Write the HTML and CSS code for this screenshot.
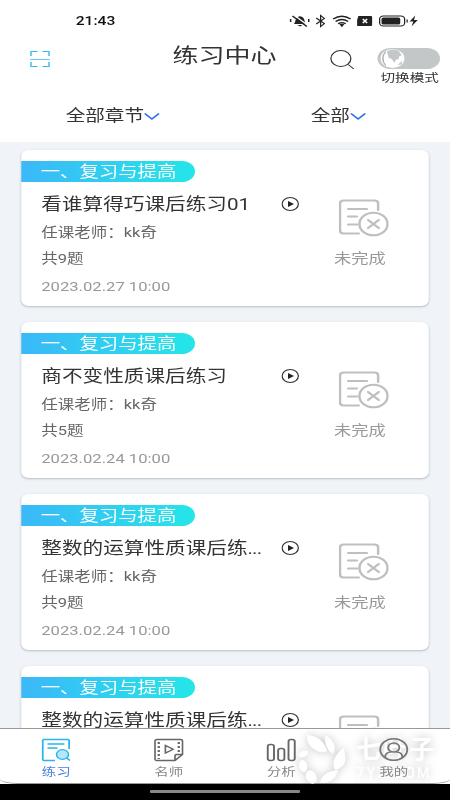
FILE: index.html
```html
<!DOCTYPE html>
<html lang="zh-CN">
<head>
<meta charset="utf-8">
<title>练习中心</title>
<link rel="stylesheet" href="styles.css">
</head>
<body>
<svg class="defs" width="0" height="0">
  <defs>
    <symbol id="play" viewBox="0 0 14.4 14"><circle cx="7.2" cy="7" r="6.5" fill="none" stroke="#333" stroke-width="1"/><path d="M5.4 4 10.200 7 5.400 10z" fill="#222"/></symbol>
    <symbol id="undone" viewBox="0 0 40 38"><g fill="none" stroke="#bfbfbf" stroke-width="2" stroke-linecap="round"><path d="M31.500 11V4.500Q31.500 1.500 28.500 1.500H4Q1 1.500 1 4.500V31.500Q1 34.500 4 34.500H16M7.500 10H22.500M7.500 17.500H14.500M7.500 25.500H14.500"/><circle cx="27.800" cy="25" r="11.300"/><path d="M23.500 21 32 29M32 21 23.500 29"/></g></symbol>
  </defs>
</svg>
<div class="screen">
  <div class="status">
    <span class="time">21:43</span>
    <svg class="status-icons" width="104" height="14" viewBox="0 0 104 14">
      <g fill="#222"><path d="M4 10C6 8.500 4.500 3 9 2.300 13.500 3 12 8.500 14 10zM7 11H11L9 12.500z"/><path d="M4.500 1.500 15.500 11.500" stroke="#fff" stroke-width="1.200"/><path d="M3 2 14.500 12.500M1.500 5V8M16 5V8" stroke="#222" stroke-width="1.200" fill="none"/></g>
      <path d="M22 4 28.500 9.500 25.500 12.500V1.500L28.500 4.500 22 10" fill="none" stroke="#222"/>
      <g fill="none" stroke="#222" stroke-width="1.300"><path d="M35.500 5Q42.500 -.5 49.500 5M37.500 7.500Q42.500 3.500 47.500 7.500M39.500 9.800Q42.500 7.500 45.500 9.800"/><path d="M41.500 10.500H43.500L42.500 12z" fill="#222"/></g>
      <g transform="translate(-2.800 0)">
        <path d="M58.500 2H68.500Q69.500 2 69.500 3V11Q69.500 12 68.500 12H57.500V6Z" fill="#222"/><path d="M62 5 65.500 9M65.500 5 62 9" stroke="#fff" stroke-width="1.200"/>
        <rect x="75.500" y="2" width="20" height="10" rx="3" fill="none" stroke="#222"/><rect x="77" y="3.500" width="15" height="7" rx="1.500" fill="#222"/><path d="M97.500 5.500V8.500" stroke="#222"/>
        <path d="M104 1.500 99.500 7.500H102.500L101 12.500 106 6H103Z" fill="#222"/>
      </g>
    </svg>
  </div>
  <header class="header">
    <svg class="scan" width="16" height="18" viewBox="0 0 16 18"><path d="M.8 6V1.500H6M10 1.500H15.200V6M.8 12V16.500H6M10 16.500H15.200V12" fill="none" stroke="#35b8ee" stroke-width="1.100"/><path d="M0 9.500H16" stroke="#69c9f3"/></svg>
    <h1>练习中心</h1>
    <svg class="search" width="20" height="22" viewBox="0 0 20 22"><circle cx="8.700" cy="9.500" r="8" fill="none" stroke="#333"/><path d="M14.500 15.500 19 20" stroke="#333"/></svg>
    <div class="mode">
      <div class="switch"><svg width="20" height="21" viewBox="0 0 20 21"><circle cx="10" cy="10.500" r="9.500" fill="#fff"/><path d="M5.500 3.500Q10 0 15 3L17.500 7.500Q14.500 7.500 15 11L12.500 12 11.500 15 9.500 11Q6.500 10.500 6.500 7.500ZM14 17 18 12.500 17 16.500Z" fill="#c3c7c8"/><path d="M4.500 3.500Q0 10.500 4.500 17.500" fill="none" stroke="#a9adae"/></svg></div>
      <span>切换模式</span>
    </div>
  </header>
  <div class="filters">
    <div>全部章节<svg width="13" height="9" viewBox="0 0 13 9"><path d="M.8 1.500 6.500 7 12.200 1.500" fill="none" stroke="#2c73e0" stroke-width="1.500"/></svg></div>
    <div>全部<svg width="13" height="9" viewBox="0 0 13 9"><path d="M.8 1.500 6.500 7 12.200 1.500" fill="none" stroke="#2c73e0" stroke-width="1.500"/></svg></div>
  </div>
  <main class="list">
    <article class="card">
      <div class="tag">一、复习与提高</div>
      <div class="body">
        <div class="info"><h2>看谁算得巧课后练习01</h2><p class="teacher">任课老师：kk奇</p><p class="count">共9题</p><p class="date">2023.02.27 10:00</p></div>
        <svg class="play"><use href="#play"/></svg>
        <div class="state"><svg><use href="#undone"/></svg><span>未完成</span></div>
      </div>
    </article>
    <article class="card">
      <div class="tag">一、复习与提高</div>
      <div class="body">
        <div class="info"><h2>商不变性质课后练习</h2><p class="teacher">任课老师：kk奇</p><p class="count">共5题</p><p class="date">2023.02.24 10:00</p></div>
        <svg class="play"><use href="#play"/></svg>
        <div class="state"><svg><use href="#undone"/></svg><span>未完成</span></div>
      </div>
    </article>
    <article class="card">
      <div class="tag">一、复习与提高</div>
      <div class="body">
        <div class="info"><h2>整数的运算性质课后练<i>...</i></h2><p class="teacher">任课老师：kk奇</p><p class="count">共9题</p><p class="date">2023.02.24 10:00</p></div>
        <svg class="play"><use href="#play"/></svg>
        <div class="state"><svg><use href="#undone"/></svg><span>未完成</span></div>
      </div>
    </article>
    <article class="card">
      <div class="tag">一、复习与提高</div>
      <div class="body">
        <div class="info"><h2>整数的运算性质课后练<i>...</i></h2></div>
        <svg class="play"><use href="#play"/></svg>
        <div class="state"><svg><use href="#undone"/></svg></div>
      </div>
    </article>
  </main>
  <div class="bottom">
    <nav class="tabs">
      <div class="watermark">
        <svg width="56" height="56" viewBox="0 0 56 56"><g fill="#fff"><path d="M11 3Q26 4 31 19Q24 23 15 15Q10 10 11 3Z"/><path d="M29 3Q42 11 37 22Q27 16 29 3Z"/><path d="M47 16Q54 34 39 38Q33 28 47 16Z"/><path d="M42 38Q38 52 24 51Q25 40 42 38Z"/><ellipse cx="15" cy="45" rx="5" ry="7" transform="rotate(-25 15 45)"/><ellipse cx="7" cy="34" rx="4" ry="6" transform="rotate(-15 7 34)"/><ellipse cx="7" cy="22" rx="5" ry="3" transform="rotate(-25 7 22)"/></g></svg>
        <div class="brand"><b>七叶子</b><span>7YZ.COM</span></div>
      </div>
      <div class="tab active"><svg width="24" height="24" viewBox="0 0 24 24"><path d="M22.300 11V2.500Q22.300 1.500 21.300 1.500H2.200Q1.200 1.500 1.200 2.500V21.500Q1.200 22.500 2.200 22.500H11M5 6H18.500M5 10H13" fill="none" stroke="#2bb4ec" stroke-width="1.400"/><circle cx="17" cy="16.500" r="4.800" fill="#b5e7fb" stroke="#2bb4ec" stroke-width="1.200"/><path d="M20.300 20 23 22.500" stroke="#2bb4ec" stroke-width="1.400"/></svg><span>练习</span></div>
      <div class="tab"><svg width="24" height="24" viewBox="0 0 24 24"><path d="M17 22.500H2.500Q1 22.500 1 21V3Q1 1.500 2.500 1.500H21.500Q23 1.500 23 3V16.500ZM17 22.500V18Q17 16.500 18.500 16.500H23M9.300 7.500V15L15.500 11.200Z" fill="none" stroke="#666" stroke-width="1.300"/><path d="M4 4V21M20 4V15" fill="none" stroke="#666" stroke-width="1.800" stroke-dasharray="2 2"/></svg><span>名师</span></div>
      <div class="tab"><svg width="24" height="24" viewBox="0 0 24 24"><g fill="none" stroke="#666" stroke-width="1.500"><rect x="1.200" y="6.500" width="5" height="16" rx="2"/><rect x="9.500" y="10.500" width="5" height="12" rx="2"/><rect x="17.800" y="1.500" width="5" height="21" rx="2"/></g></svg><span>分析</span></div>
      <div class="tab"><svg width="24" height="24" viewBox="0 0 24 24"><g fill="none" stroke="#777" stroke-width="1.500"><circle cx="12" cy="11.500" r="10.800"/><circle cx="12" cy="9.500" r="4.500"/><path d="M5 20Q5 14 10 14M19 20Q19 14 14 14"/></g></svg><span>我的</span></div>
    </nav>
    <div class="homebar"><i></i></div>
  </div>
</div>
</body>
</html>
```

FILE: styles.css
```css
* { box-sizing: border-box; margin: 0; padding: 0; }
body { width: 450px; height: 800px; overflow: hidden; position: relative; background: #fff; }
svg { display: block; flex: none; overflow: visible; }
.defs { position: absolute; }

/* The 360-unit layout is widened to fill the viewport. */
.screen {
  width: 360px; height: 800px; display: flex; flex-direction: column; overflow: hidden;
  transform: scaleX(1.25); transform-origin: 0 0;
  font-family: Roboto, "Noto Sans CJK SC", sans-serif; font-weight: 400; color: #333;
}
.status { height: 41px; padding: 0 24px 0 60.500px; display: flex; align-items: center; justify-content: space-between; }
.time { font-size: 12.500px; font-weight: 500; color: #111; }
.status-icons { margin-right: 1px; }

.header { height: 56px; display: flex; align-items: flex-start; padding: 0 8px 0 24px; }
.scan { margin-top: 9px; }
h1 { font-size: 20.800px; line-height: 30px; font-weight: 400; margin-left: 98px; width: 84px; white-space: nowrap; }
.search { margin: 8px 0 0 42px; }
.mode { margin: 7px 0 0 auto; display: flex; flex-direction: column; align-items: center; }
.switch { width: 50px; height: 21px; border-radius: 11px; background: #c3c7c8; padding-left: 2px; }
.mode span { font-size: 11.700px; line-height: 17px; margin: 1px 0 0 1.500px; }

.filters { height: 45px; display: flex; align-items: flex-start; padding-left: 52.500px; }
.filters div { width: 196px; flex: none; display: flex; align-items: center; font-size: 15.700px; line-height: 38px; }
.filters div + div { width: 60px; }

.list { flex: 1; min-height: 0; overflow: hidden; background: #f0f4f8; padding: 8px 16.800px 0 16.500px; display: flex; flex-direction: column; gap: 16px; }
.card { height: 156px; flex: none; background: #fff; border-radius: 6px; padding-top: 11px; box-shadow: 0 1px 2px rgba(60, 75, 90, .32); }
.tag { width: 139.500px; height: 21px; padding-left: 16px; border-radius: 0 10.500px 10.500px 0; background: linear-gradient(90deg, #3bb8f8, #24e6e8); color: #fff; font-size: 15.500px; line-height: 23px; white-space: nowrap; }
.body { display: flex; padding-left: 16.500px; }
.info { width: 191.500px; white-space: nowrap; }
h2 { font-size: 16.500px; font-weight: 400; line-height: 24px; margin-top: 11px; }
h2 i { font-style: normal; letter-spacing: -.7px; }
.teacher, .count { font-size: 13.200px; line-height: 20px; color: #666; }
.teacher { margin-top: 6px; }
.count { margin-top: 6px; }
.date { font-size: 13.300px; line-height: 20px; margin-top: 8px; color: #999; }
.play { width: 14.400px; height: 14px; margin-top: 14.500px; }
.state { margin-left: 27px; width: 44px; display: flex; flex-direction: column; align-items: center; color: #999; font-size: 13.800px; line-height: 20px; white-space: nowrap; }
.state svg { width: 40px; height: 38px; margin: 17px 0 11px 6.500px; }

.bottom { height: 72px; flex: none; background: #fff; }
.tabs { position: relative; height: 56px; border: solid #999; border-width: 1px 0; border-radius: 0 0 14px 14px / 0 0 5px 5px; display: flex; }
.tab { position: relative; width: 90px; display: flex; flex-direction: column; align-items: center; padding-top: 9px; color: #888; }
.tab span { font-size: 11.600px; line-height: 17px; margin-top: 2px; }
.tab.active span { color: #4a7fe0; }
.homebar { height: 16px; display: flex; justify-content: center; padding-top: 6px; background: #000; }
.homebar i { width: 120px; height: 3px; background: #888; border-radius: 1px; }

/* Site mark behind the tab items, kept at its natural proportions. */
.watermark { position: absolute; left: 236.800px; top: 3px; display: flex; transform: scaleX(.8); transform-origin: 0 0; filter: drop-shadow(0 0 5px rgba(0, 0, 0, .24)); color: #fff; font-family: "Noto Sans CJK SC", sans-serif; }
.brand { display: flex; flex-direction: column; padding-left: 4px; white-space: nowrap; }
.brand b { font-size: 25px; line-height: 31px; letter-spacing: 1.500px; }
.brand span { font: 14px/20px Roboto, sans-serif; font-weight: 500; letter-spacing: 2.200px; }
```
